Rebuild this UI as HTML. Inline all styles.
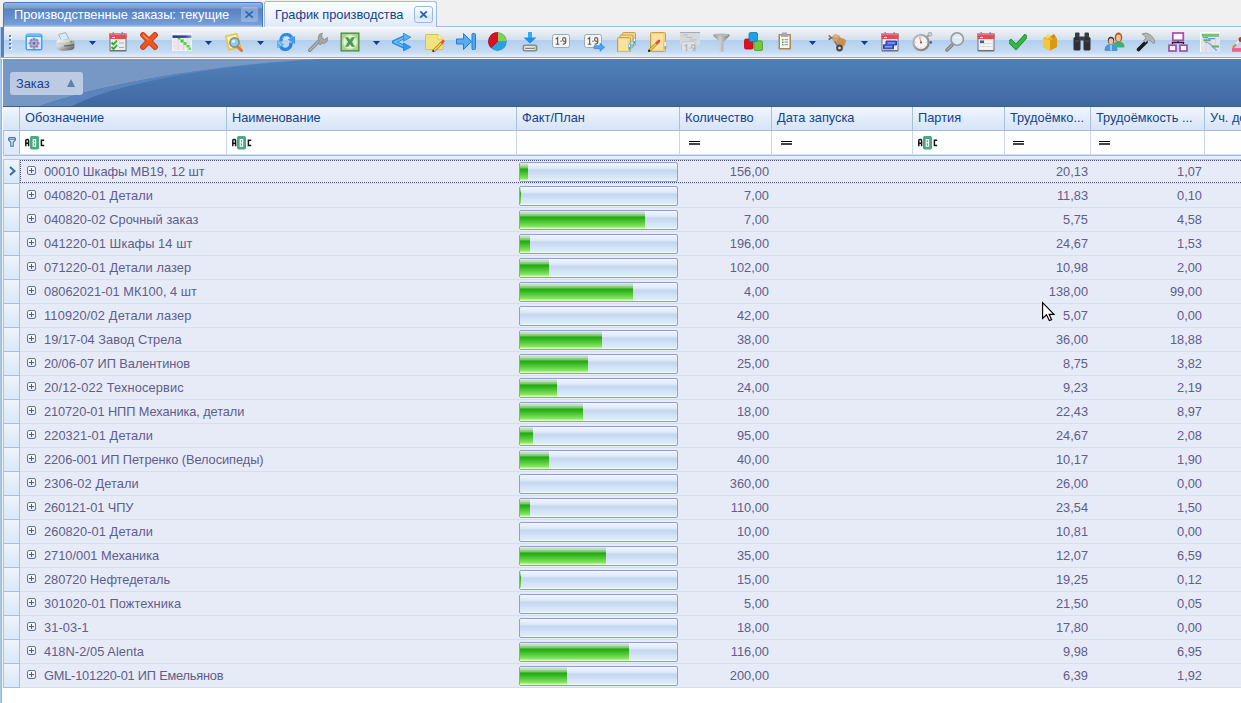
<!DOCTYPE html>
<html><head><meta charset="utf-8"><style>
*{margin:0;padding:0;box-sizing:border-box}
html,body{width:1241px;height:703px;overflow:hidden;background:#fff}
body{position:relative;font-family:"Liberation Sans",sans-serif;font-size:12.8px}
.a{position:absolute}
.t{position:absolute;white-space:pre;line-height:23px;height:23px}
.hd{color:#15428b}
.dt{color:#5f5d8b}
.r{text-align:right}
</style></head><body>

<div class="a" style="left:0;top:0;width:1241px;height:27px;background:#f0f0f0"></div>
<div class="a" style="left:437px;top:26px;width:804px;height:1px;background:#99bbe8"></div>
<div class="a" style="left:3px;top:2px;width:260px;height:25px;border:1px solid #4a78c0;border-bottom:none;border-radius:3px 3px 0 0;background:linear-gradient(#a9c0e8 0px,#8eaddb 1px,#7b9dd0 5px,#5883c3 6px,#5f89c7 11px,#78a0d8 22px,#a9c6ee 23px)"></div>
<div class="t" style="left:14px;top:3px;color:#fff">Производственные заказы: текущие</div>
<div class="a" style="left:241px;top:7px;width:17px;height:15px;border-radius:2px;background:rgba(255,255,255,0.25)"></div>
<svg class="a" style="left:244px;top:10px" width="11" height="9"><path d="M1.5 1.3L8.8 7.6M8.8 1.3L1.5 7.6" stroke="#2f66b8" stroke-width="1.7"/></svg>
<div class="a" style="left:264px;top:1px;width:173px;height:26px;border:1px solid #99bbe8;border-bottom:none;border-radius:3px 3px 0 0;background:linear-gradient(#ffffff,#f3f8fe 8px,#dfeaf9 24px,#eef4fb 25px)"></div>
<div class="t hd" style="left:275px;top:3px">График производства</div>
<div class="a" style="left:414px;top:6px;width:19px;height:17px;border:1px solid #9cb8e0;border-radius:3px;background:linear-gradient(#fbfdff,#e6effa 8px,#d6e4f6 9px,#eaf2fc)"></div>
<svg class="a" style="left:419px;top:10px" width="10" height="9"><path d="M1.3 1.3L7.8 7.6M7.8 1.3L1.3 7.6" stroke="#2a5cb0" stroke-width="1.7"/></svg>
<div class="a" style="left:0;top:27px;width:1px;height:676px;background:#a8c8f0"></div>
<div class="a" style="left:1px;top:58px;width:1px;height:645px;background:#98b6e0"></div>
<div class="a" style="left:1px;top:27px;width:3px;height:31px;background:#5a80b8"></div>
<div class="a" style="left:4px;top:27px;width:1237px;height:30px;border-radius:3px 0 0 3px;background:linear-gradient(#ffffff 0px,#f4f5f8 1px,#d3dfea 13px,#b2cfee 13px,#c6dbf3 25px,#dae8f8 28px,#e4eefa 30px)"></div>
<div class="a" style="left:1px;top:57px;width:1240px;height:1px;background:#8eaad0"></div>
<div class="a" style="left:1px;top:58px;width:1240px;height:1px;background:#ffffff"></div>
<div class="a" style="left:9px;top:35px;width:2px;height:2px;background:#6282b8;box-shadow:1px 1px 0 rgba(255,255,255,0.85)"></div>
<div class="a" style="left:9px;top:39px;width:2px;height:2px;background:#6282b8;box-shadow:1px 1px 0 rgba(255,255,255,0.85)"></div>
<div class="a" style="left:9px;top:43px;width:2px;height:2px;background:#6282b8;box-shadow:1px 1px 0 rgba(255,255,255,0.85)"></div>
<div class="a" style="left:9px;top:47px;width:2px;height:2px;background:#6282b8;box-shadow:1px 1px 0 rgba(255,255,255,0.85)"></div>
<svg class="a" style="left:25px;top:33px" width="18" height="18" viewBox="0 0 18 18"><defs><linearGradient id="wg" x1="0" y1="0" x2="1" y2="1"><stop offset="0" stop-color="#ffffff"/><stop offset="1" stop-color="#dcd6f4"/></linearGradient></defs><rect x="0.5" y="0.5" width="17" height="17" rx="2.5" fill="#3ba3ff"/><rect x="1.5" y="1.2" width="15" height="1.6" fill="#7cc4ff"/><rect x="2" y="4" width="14" height="12" fill="url(#wg)"/><path d="M12.71 8.82 L14.46 9.05 L14.46 11.55 L12.71 11.78 L12.68 11.88 L13.74 13.28 L11.98 15.04 L10.58 13.98 L10.48 14.01 L10.25 15.76 L7.75 15.76 L7.52 14.01 L7.42 13.98 L6.02 15.04 L4.26 13.28 L5.32 11.88 L5.29 11.78 L3.54 11.55 L3.54 9.05 L5.29 8.82 L5.32 8.72 L4.26 7.32 L6.02 5.56 L7.42 6.62 L7.52 6.59 L7.75 4.84 L10.25 4.84 L10.48 6.59 L10.58 6.62 L11.98 5.56 L13.74 7.32 L12.68 8.72Z" fill="#8e8cc0"/><circle cx="9" cy="10.3" r="3" fill="#aeacd6"/><circle cx="9" cy="10.3" r="1.2" fill="#6a68a8"/></svg>
<svg class="a" style="left:56px;top:32px" width="19" height="19" viewBox="0 0 19 19"><defs><linearGradient id="pg" x1="0" y1="0" x2="1" y2="1"><stop offset="0" stop-color="#fafafa"/><stop offset="0.4" stop-color="#d0d0d0"/><stop offset="0.75" stop-color="#808080"/><stop offset="1" stop-color="#5a5a5a"/></linearGradient></defs><path d="M2.5 2.5L9.5 0.5L13 7L5.5 8.5Z" fill="#d2ecfc" stroke="#9aa6b2" stroke-width="0.8"/><path d="M0.5 10Q0.5 7.5 3 7.5H15Q18.5 7.5 18.5 11V14.5Q18.5 17.5 15.5 18L7 18.8Q0.5 18.8 0.5 15Z" fill="url(#pg)"/><path d="M1 11.5Q6 12.5 18 11" stroke="#b8b8b8" stroke-width="0.6" fill="none"/><path d="M8 14Q13 14 18 12.5" stroke="#5a5a5a" stroke-width="1" fill="none"/><circle cx="15.3" cy="9.8" r="1.1" fill="#3cc03c"/></svg>
<svg class="a" style="left:89px;top:41px" width="7" height="4" viewBox="0 0 7 4"><path d="M0 0H7L3.5 4Z" fill="#1b3d82"/></svg>
<svg class="a" style="left:109px;top:32px" width="18" height="20" viewBox="0 0 18 20"><rect x="0.5" y="1" width="17" height="18.5" rx="1" fill="#6e6e7c"/><rect x="1.5" y="6.5" width="15" height="11.5" fill="#e9efec"/><rect x="0.5" y="1" width="17" height="6" rx="1" fill="#e64a52"/><rect x="0.5" y="1" width="17" height="2" rx="1" fill="#f07a80"/><rect x="3" y="5" width="3" height="1" fill="#fff"/><rect x="3.5" y="0" width="1.6" height="4.5" rx="0.8" fill="#8a8a8a"/><rect x="12.5" y="0" width="1.6" height="4.5" rx="0.8" fill="#8a8a8a"/><path d="M2.5 10.5L4.5 12.5L8 8.5" fill="none" stroke="#2aa82a" stroke-width="1.8"/><path d="M2.5 15L4.5 17L8 13" fill="none" stroke="#2aa82a" stroke-width="1.8"/><rect x="10" y="10.5" width="5" height="1" fill="#a8b0b0"/><rect x="10" y="15" width="5" height="1" fill="#a8b0b0"/></svg>
<svg class="a" style="left:140px;top:32px" width="18" height="18" viewBox="0 0 18 18"><path d="M3 3L15 15M15 3L3 15" stroke="#b83010" stroke-width="5.6" stroke-linecap="round"/><path d="M3 3L15 15M15 3L3 15" stroke="#f2541e" stroke-width="4.2" stroke-linecap="round"/><path d="M3.5 3.2L8 7.5" stroke="#ff9060" stroke-width="1.2" stroke-linecap="round"/></svg>
<svg class="a" style="left:172px;top:33px" width="20" height="18" viewBox="0 0 20 18"><rect x="0" y="0" width="20" height="18" fill="#fdfcfd"/><rect x="0.5" y="1" width="19" height="16.5" fill="#f2e6ee"/><path d="M6 5V17.5M11.5 5V17.5M16 5V17.5" stroke="#ddd0da" stroke-width="0.8"/><path d="M0.5 9H19.5M0.5 13H19.5" stroke="#eadde6" stroke-width="0.8"/><defs><linearGradient id="gh" x1="0" x2="1"><stop offset="0" stop-color="#1a3490"/><stop offset="0.7" stop-color="#2a4ab0"/><stop offset="1" stop-color="#7aa0e0"/></linearGradient></defs><rect x="0.5" y="2.4" width="19" height="2.5" fill="url(#gh)"/><rect x="6" y="5" width="2.5" height="1.5" fill="#40d040"/><rect x="8.5" y="6.5" width="3" height="3" fill="#38d038"/><rect x="11.5" y="9" width="3" height="3" fill="#48d848"/><rect x="14.5" y="12" width="3" height="2.5" fill="#50dc50"/><rect x="16.5" y="14.5" width="2.5" height="2.5" fill="#60e060"/></svg>
<svg class="a" style="left:205px;top:41px" width="7" height="4" viewBox="0 0 7 4"><path d="M0 0H7L3.5 4Z" fill="#1b3d82"/></svg>
<svg class="a" style="left:225px;top:33px" width="19" height="19" viewBox="0 0 19 19"><path d="M0.5 3L12 0.5L16 14L4 17Z" fill="#f2d860" stroke="#e0b830" stroke-width="0.8"/><path d="M2 4L11 2L14 13L5 15Z" fill="#fff3b0"/><path d="M11.5 12.5L16.5 17.5" stroke="#f07030" stroke-width="3" stroke-linecap="round"/><circle cx="9.5" cy="9.5" r="4.6" fill="#86cdf6" stroke="#8c8c8c" stroke-width="1.6"/><circle cx="8.5" cy="8.3" r="1.6" fill="#d8f2ff"/></svg>
<svg class="a" style="left:257px;top:41px" width="7" height="4" viewBox="0 0 7 4"><path d="M0 0H7L3.5 4Z" fill="#1b3d82"/></svg>
<svg class="a" style="left:277px;top:33px" width="18" height="18" viewBox="0 0 18 18"><path d="M3.8 8.5Q4.2 1.6 10 1.6Q13.2 1.6 14.6 4.6" fill="none" stroke="#2e8ae6" stroke-width="3.4"/><path d="M5 6Q6 3 10 3" fill="none" stroke="#8ccafa" stroke-width="1"/><path d="M10.5 6.5L18 3V11Z" fill="#3c9af0"/><path d="M14.2 9.5Q13.8 16.4 8 16.4Q4.8 16.4 3.4 13.4" fill="none" stroke="#2a84e0" stroke-width="3.4"/><path d="M7.5 11.5L0 15V7Z" fill="#58b0f6"/><path d="M1.5 9L4 12" stroke="#c0e4ff" stroke-width="0.8"/></svg>
<svg class="a" style="left:308px;top:32px" width="20" height="20" viewBox="0 0 20 20"><path d="M1.8 18.2L11 9" stroke="#858585" stroke-width="3.4" stroke-linecap="round"/><path d="M1.8 18.2L11 9" stroke="#b8b8b8" stroke-width="1.4" stroke-linecap="round"/><path d="M14.5 1Q10.5 1.5 10.2 5.5Q10 7.5 11.5 9L10 11L12 13L14 11.2Q17 12 19 9.5Q20 7.8 19.5 5.5L16.5 7.5L14 6L13.8 2.8Z" fill="#a6a6a6" stroke="#8a8a8a" stroke-width="0.8"/></svg>
<svg class="a" style="left:340px;top:32px" width="20" height="20" viewBox="0 0 20 20"><defs><radialGradient id="xg"><stop offset="0" stop-color="#c0e4a8"/><stop offset="0.7" stop-color="#e4f6d4"/><stop offset="1" stop-color="#a8d090"/></radialGradient></defs><rect x="0.5" y="0.5" width="19" height="19" fill="#4a8a3a"/><rect x="1.8" y="1.8" width="16.4" height="16.4" fill="url(#xg)"/><path d="M5 5.2H8.2L10 7.8L11.8 5.2H15L12 10L15 14.8H11.8L10 12.2L8.2 14.8H5L8 10Z" fill="#4a9a52"/><path d="M5.5 5.6H8L10 8.4" stroke="#70b870" stroke-width="0.6" fill="none"/></svg>
<svg class="a" style="left:373px;top:41px" width="7" height="4" viewBox="0 0 7 4"><path d="M0 0H7L3.5 4Z" fill="#1b3d82"/></svg>
<svg class="a" style="left:392px;top:33px" width="19" height="18" viewBox="0 0 19 18"><path d="M1.8 9L12.5 4M1.8 9L12.5 14" fill="none" stroke="#2a86d8" stroke-width="3.8" stroke-linecap="round"/><path d="M2.5 9L12.5 4.3M2.5 9L12.5 13.7" fill="none" stroke="#6cc0f8" stroke-width="1.8" stroke-linecap="round"/><path d="M11.5 0.2L18.8 4.2L11.5 8.2Z" fill="#56b2f4" stroke="#2a86d8" stroke-width="0.8" stroke-linejoin="round"/><path d="M11.5 10L18.8 14L11.5 18Z" fill="#2c9aee" stroke="#2a80d0" stroke-width="0.8" stroke-linejoin="round"/></svg>
<svg class="a" style="left:425px;top:34px" width="20" height="18" viewBox="0 0 20 18"><path d="M0.5 1Q0.5 0.5 1 0.5H13L18 5V15Q18 15.5 17.5 15.5H1Q0.5 15.5 0.5 15Z" fill="#f2e37e" stroke="#d6c24c" stroke-width="1"/><path d="M13 0.5V5H18" fill="#fff6c0" stroke="#d6c24c" stroke-width="0.8"/><path d="M8.5 17L17.5 8" stroke="#8a6a10" stroke-width="3" stroke-linecap="round"/><path d="M8.5 17L17.5 8" stroke="#f0d040" stroke-width="1.8"/><path d="M17 8.5L18.3 7.2" stroke="#f05050" stroke-width="2.6" stroke-linecap="round"/><path d="M8 17.5L9 16.5" stroke="#202020" stroke-width="1.5"/></svg>
<svg class="a" style="left:456px;top:33px" width="20" height="17" viewBox="0 0 20 17"><path d="M0.5 6H7.5V0.5L15.5 8.5L7.5 16.5V11H0.5Z" fill="#52aef0" stroke="#2a7ad0" stroke-width="1"/><rect x="16" y="0.5" width="3.5" height="16" rx="1" fill="#4aa8ee" stroke="#2a7ad0" stroke-width="1"/></svg>
<svg class="a" style="left:488px;top:32px" width="19" height="19" viewBox="0 0 19 19"><circle cx="9.5" cy="9.5" r="9.2" fill="#2a7ab8"/><path d="M9.5 9.5V0.6A8.9 8.9 0 0 1 18.4 9.5Z" fill="#82d050"/><path d="M9.5 9.5H18.4A8.9 8.9 0 0 1 3.2 15.8Z" fill="#2aa2dc"/><path d="M9.5 9.5L3.2 15.8A8.9 8.9 0 0 1 9.5 0.6Z" fill="#e0101e"/><path d="M9.5 9.5L3.2 15.8A8.9 8.9 0 0 1 9.5 0.6Z" fill="none" stroke="#a00818" stroke-width="0.6"/></svg>
<svg class="a" style="left:522px;top:32px" width="16" height="20" viewBox="0 0 16 20"><rect x="6" y="0" width="4" height="6" fill="#3aa8f4"/><path d="M1.5 5.5H14.5L8 11.5Z" fill="#1a94ee"/><rect x="0.5" y="12.5" width="15" height="7" rx="2.5" fill="#8a8a8a"/><rect x="2" y="14" width="12" height="4" rx="1.5" fill="#e8e8e8"/><rect x="3" y="15.8" width="9" height="1" fill="#6a6a6a"/><circle cx="12.5" cy="16.3" r="1" fill="#40d040"/></svg>
<svg class="a" style="left:552px;top:34px" width="18" height="14" viewBox="0 0 18 14"><rect x="0.5" y="0.5" width="17" height="13" rx="2" fill="#f4f4f4" stroke="#a0a8b2" stroke-width="1"/><path d="M3.8 5L5.6 3.6V10.2M3.8 10.2H7.4" fill="none" stroke="#5e5e5e" stroke-width="1.15"/><rect x="8.4" y="6.6" width="1.2" height="1.2" fill="#5e5e5e"/><path d="M13.6 7.2Q10.6 7.8 10.6 5.4Q10.6 3.6 12.1 3.6Q13.8 3.6 13.8 6.2V7.6Q13.8 10.3 10.8 10.3" fill="none" stroke="#5e5e5e" stroke-width="1.15"/></svg>
<svg class="a" style="left:584px;top:34px" width="21" height="18" viewBox="0 0 21 18"><rect x="0.5" y="0.5" width="17" height="13" rx="2" fill="#f4f4f4" stroke="#a0a8b2" stroke-width="1"/><path d="M3.8 5L5.6 3.6V10.2M3.8 10.2H7.4" fill="none" stroke="#5e5e5e" stroke-width="1.15"/><rect x="8.4" y="6.6" width="1.2" height="1.2" fill="#5e5e5e"/><path d="M13.6 7.2Q10.6 7.8 10.6 5.4Q10.6 3.6 12.1 3.6Q13.8 3.6 13.8 6.2V7.6Q13.8 10.3 10.8 10.3" fill="none" stroke="#5e5e5e" stroke-width="1.15"/><path d="M10 11.8H16V9.2L20.6 13.2L16 17.2V14.6H10Z" fill="#4aa8f2" stroke="#2a7ed0" stroke-width="0.7"/></svg>
<svg class="a" style="left:617px;top:32px" width="19" height="20" viewBox="0 0 19 20"><rect x="5.5" y="0.5" width="13" height="13" rx="1" fill="#f2d488" stroke="#caa050" stroke-width="1"/><rect x="7" y="2" width="9" height="10" fill="#f8e2a0"/><rect x="3.0" y="3.0" width="13" height="13" rx="1" fill="#f2d488" stroke="#caa050" stroke-width="1"/><rect x="4.5" y="4.5" width="9" height="10" fill="#f8e2a0"/><rect x="0.5" y="5.5" width="13" height="14.5" rx="1" fill="#f2d488" stroke="#caa050" stroke-width="1"/><rect x="2" y="7" width="9" height="11.5" fill="#f8e2a0"/><rect x="16.5" y="6" width="2" height="6" rx="1" fill="#fff" stroke="#38a8d8" stroke-width="0.6"/><rect x="14" y="9" width="2" height="6" rx="1" fill="#fff" stroke="#38a8d8" stroke-width="0.6"/><rect x="11.5" y="12" width="2" height="6" rx="1" fill="#fff" stroke="#38a8d8" stroke-width="0.6"/><rect x="17" y="9" width="1" height="2.5" fill="#38a8d8"/><rect x="14.5" y="12" width="1" height="2.5" fill="#38a8d8"/><rect x="12" y="15" width="1" height="2.5" fill="#38a8d8"/></svg>
<svg class="a" style="left:648px;top:32px" width="19" height="20" viewBox="0 0 19 20"><rect x="2.5" y="0.5" width="15" height="19" rx="1" fill="#f2d488" stroke="#caa050" stroke-width="1"/><rect x="4" y="2" width="11" height="16" fill="#f8e2a0"/><rect x="16" y="9.5" width="2.2" height="8" rx="1" fill="#fff" stroke="#c8a060" stroke-width="0.6"/><rect x="16.5" y="14" width="1.2" height="3" fill="#30a0e0"/><path d="M1 19L10 10" stroke="#9a7a20" stroke-width="2.8" stroke-linecap="round"/><path d="M1.5 18.5L10 10" stroke="#f2d840" stroke-width="1.6"/><path d="M9 11L11 9" stroke="#f04848" stroke-width="2.6" stroke-linecap="round"/><path d="M0.5 19.5L2 18" stroke="#181818" stroke-width="1.6"/></svg>
<svg class="a" style="left:680px;top:32px" width="20" height="19" viewBox="0 0 20 19"><rect x="0" y="0" width="20" height="13.5" fill="#d6d9de"/><rect x="0" y="0" width="20" height="1" fill="#a8acb2"/><path d="M3 3H8M6 5.5H12M9 8H17" stroke="#b8bcc2" stroke-width="1"/><rect x="1.5" y="9.5" width="14" height="13" rx="2" fill="#dcdfe4" stroke="#c4c8ce" stroke-width="1"/><path d="M4.8 14L6.6 12.6V19.2M4.8 19.2H8.4" fill="none" stroke="#b0b4ba" stroke-width="1.15"/><rect x="9.4" y="15.6" width="1.2" height="1.2" fill="#b0b4ba"/><path d="M14.6 16.2Q11.6 16.8 11.6 14.4Q11.6 12.6 13.1 12.6Q14.8 12.6 14.8 15.2V16.6Q14.8 19.3 11.8 19.3" fill="none" stroke="#b0b4ba" stroke-width="1.15"/></svg>
<svg class="a" style="left:713px;top:33px" width="17" height="19" viewBox="0 0 17 19"><defs><linearGradient id="fg" x1="0" x2="1"><stop offset="0" stop-color="#8a8a8a"/><stop offset="0.4" stop-color="#d0d0d0"/><stop offset="1" stop-color="#7a7a7a"/></linearGradient></defs><path d="M0.5 2Q0.5 0.5 8.5 0.5Q16.5 0.5 16.5 2V3L10.5 9V18Q10.5 19 8.5 19Q6.5 19 6.5 18V9L0.5 3Z" fill="url(#fg)"/><ellipse cx="8.5" cy="2" rx="7.5" ry="1.3" fill="#b8b8b8"/></svg>
<svg class="a" style="left:744px;top:32px" width="19" height="19" viewBox="0 0 19 19"><rect x="0.5" y="7" width="8.5" height="10" rx="1.5" fill="#e2101c" stroke="#b80810" stroke-width="0.8"/><rect x="10" y="8.8" width="8.5" height="9.7" rx="1.5" fill="#74c840" stroke="#489a28" stroke-width="0.8"/><rect x="5" y="0.5" width="8.5" height="9" rx="1.5" fill="#20a0e0" stroke="#1078b8" stroke-width="0.8"/></svg>
<svg class="a" style="left:778px;top:32px" width="13" height="18" viewBox="0 0 13 18"><rect x="0.5" y="2" width="12.5" height="15.5" rx="1" fill="#b08654"/><rect x="2" y="3.5" width="9.5" height="12.5" fill="#f8f8f8"/><path d="M4 0.5H9V3.5H10V5H3V3.5H4Z" fill="#a8a8a8"/><rect x="4" y="7" width="1.5" height="1.5" fill="#40c040"/><rect x="4" y="9.5" width="1.5" height="1.5" fill="#20b020"/><rect x="4" y="12" width="1.5" height="1.5" fill="#40c040"/><path d="M6.5 7.7H10M6.5 10.2H10M6.5 12.7H10" stroke="#a0a0a0" stroke-width="1.2"/></svg>
<svg class="a" style="left:809px;top:41px" width="7" height="4" viewBox="0 0 7 4"><path d="M0 0H7L3.5 4Z" fill="#1b3d82"/></svg>
<svg class="a" style="left:828px;top:34px" width="19" height="18" viewBox="0 0 19 18"><path d="M0.8 1.5L4 4.5M0.5 5.5L4.5 3.5L10.5 13" stroke="#6a6a6a" stroke-width="1.7" fill="none"/><rect x="4.5" y="0.5" width="7.5" height="7" rx="2.5" fill="#d4a062" transform="rotate(20 8 4)"/><rect x="9" y="4" width="8.5" height="8" rx="2.5" fill="#c99050" transform="rotate(20 13 8)"/><path d="M6 2.5Q8 1.5 10 3" stroke="#eac090" stroke-width="1.2" fill="none"/><circle cx="11.5" cy="14" r="3.4" fill="#4a4a4a"/><circle cx="11.5" cy="14" r="1.3" fill="#e0e0e0"/></svg>
<svg class="a" style="left:861px;top:41px" width="7" height="4" viewBox="0 0 7 4"><path d="M0 0H7L3.5 4Z" fill="#1b3d82"/></svg>
<svg class="a" style="left:881px;top:32px" width="18" height="20" viewBox="0 0 18 20"><rect x="0.5" y="1" width="17" height="18.5" rx="1" fill="#6e6e7c"/><rect x="1.5" y="6.5" width="15" height="11.5" fill="#e9efec"/><rect x="0.5" y="1" width="17" height="6" rx="1" fill="#e64a52"/><rect x="0.5" y="1" width="17" height="2" rx="1" fill="#f07a80"/><rect x="3" y="5" width="3" height="1" fill="#fff"/><rect x="3.5" y="0" width="1.6" height="4.5" rx="0.8" fill="#8a8a8a"/><rect x="12.5" y="0" width="1.6" height="4.5" rx="0.8" fill="#8a8a8a"/><path d="M5 9H15.5V13H12.5V16.8H2.5V12.8H5Z" fill="#3c5ad8" stroke="#2440c0" stroke-width="1"/><path d="M6.5 11H14M4 14.8H11" stroke="#c8d4f8" stroke-width="0.8"/></svg>
<svg class="a" style="left:912px;top:32px" width="21" height="20" viewBox="0 0 21 20"><defs><linearGradient id="swg" x1="0" y1="0" x2="1" y2="1"><stop offset="0" stop-color="#c8c8c8"/><stop offset="1" stop-color="#787878"/></linearGradient></defs><path d="M15 5L17.5 2.5" stroke="#9a9a9a" stroke-width="2"/><circle cx="18" cy="2.2" r="1.9" fill="#d0d0d0" stroke="#a0a0a0" stroke-width="0.8"/><rect x="17.6" y="9.2" width="2.2" height="2.4" fill="#4a5878"/><circle cx="9" cy="10.5" r="8.8" fill="url(#swg)"/><circle cx="9" cy="10.5" r="6.5" fill="#f4f4f4"/><path d="M9 4.5V5.8M9 15.2V16.5M3 10.5H4.3M13.7 10.5H15" stroke="#c0c0c0" stroke-width="0.8"/><path d="M7.6 5L9 10.5" stroke="#e05050" stroke-width="0.7"/><circle cx="9" cy="10.5" r="0.9" fill="#c02020"/></svg>
<svg class="a" style="left:945px;top:32px" width="20" height="20" viewBox="0 0 20 20"><path d="M2 18L7 13" stroke="#7a7a7a" stroke-width="3.2" stroke-linecap="round"/><path d="M2 18L7 13" stroke="#b0b0b0" stroke-width="1.2" stroke-linecap="round"/><circle cx="12.2" cy="7" r="6.2" fill="#dde9f6" stroke="#9a9a9a" stroke-width="1.6"/><path d="M9.5 5.5H16" stroke="#f4f8ff" stroke-width="1"/></svg>
<svg class="a" style="left:977px;top:32px" width="18" height="20" viewBox="0 0 18 20"><rect x="0.5" y="1" width="17" height="18.5" rx="1" fill="#6e6e7c"/><rect x="1.5" y="6.5" width="15" height="11.5" fill="#e9efec"/><rect x="0.5" y="1" width="17" height="6" rx="1" fill="#e64a52"/><rect x="0.5" y="1" width="17" height="2" rx="1" fill="#f07a80"/><rect x="3" y="5" width="3" height="1" fill="#fff"/><rect x="3.5" y="0" width="1.6" height="4.5" rx="0.8" fill="#8a8a8a"/><rect x="12.5" y="0" width="1.6" height="4.5" rx="0.8" fill="#8a8a8a"/><rect x="3" y="8.5" width="4" height="2.6" fill="#3858d0"/><path d="M9 9.8H11.5M12.5 9.8H15M3 13H6M7.5 13H10.5M11.5 13H15M3 16H6M7.5 16H10.5M11.5 16H15" stroke="#ffffff" stroke-width="1.2"/><path d="M1.5 11.5H16.5M1.5 14.5H16.5" stroke="#d0d8d8" stroke-width="0.8"/></svg>
<svg class="a" style="left:1009px;top:34px" width="18" height="16" viewBox="0 0 18 16"><path d="M2 8L7 13L16 3" fill="none" stroke="#1e8a2a" stroke-width="4.8" stroke-linecap="square"/><path d="M2 8L7 13L16 3" fill="none" stroke="#34b842" stroke-width="3.2" stroke-linecap="square"/></svg>
<svg class="a" style="left:1042px;top:33px" width="16" height="18" viewBox="0 0 16 18"><path d="M1 5L8 2.5L15 5V14L8 17.5L1 14Z" fill="#e8b020"/><path d="M1 5L8 7.5V17.5L1 14Z" fill="#f4c838"/><path d="M8 7.5L15 5V14L8 17.5Z" fill="#d89a10"/><path d="M3 4L6 1L9 3L6 6Z" fill="#f8d860"/><path d="M9 3L12 1L14 4L11 6Z" fill="#c88a10"/></svg>
<svg class="a" style="left:1073px;top:32px" width="18" height="19" viewBox="0 0 18 19"><rect x="2" y="0.5" width="4.5" height="5" rx="1" fill="#383c40"/><rect x="11.5" y="0.5" width="4.5" height="5" rx="1" fill="#383c40"/><rect x="0.5" y="5" width="7" height="13.5" rx="1.5" fill="#2e3236"/><rect x="10.5" y="5" width="7" height="13.5" rx="1.5" fill="#2e3236"/><rect x="6" y="4.5" width="6" height="4" fill="#3a3e42"/><path d="M2 9H6M12 9H16" stroke="#5a5e62" stroke-width="0.8"/></svg>
<svg class="a" style="left:1104px;top:32px" width="21" height="19" viewBox="0 0 21 19"><path d="M8.5 14.5Q9 9.5 14.5 9.5Q20 9.5 20.5 14.5Q20.5 15.5 19 15.5H10Q8.5 15.5 8.5 14.5Z" fill="#3cb470"/><ellipse cx="14.5" cy="5.5" rx="3.8" ry="5" fill="#b05a2a"/><ellipse cx="14.5" cy="6" rx="2.4" ry="3.4" fill="#f2c090"/><path d="M0.5 17.5Q1 12 7 12Q13 12 13.5 17.5Q13.5 19 12 19H2Q0.5 19 0.5 17.5Z" fill="#4a98dc"/><rect x="6.5" y="12.5" width="1" height="6" fill="#f0f8ff"/><ellipse cx="7" cy="8.5" rx="3.2" ry="3.8" fill="#3a2a2a"/><ellipse cx="7" cy="9.3" rx="2.4" ry="3" fill="#f2c090"/></svg>
<svg class="a" style="left:1136px;top:32px" width="20" height="20" viewBox="0 0 20 20"><path d="M2.5 17.5L10 10" stroke="#1a1a1a" stroke-width="3.6" stroke-linecap="round"/><path d="M6 2Q10 -0.5 14.5 3Q18.5 6 19 10.5L17 11.5Q15 8 12 8L9.5 10.5L7.5 8.5L10 6Q9 3.5 6 2Z" fill="#b4b4b4" stroke="#8a8a8a" stroke-width="0.8"/></svg>
<svg class="a" style="left:1168px;top:32px" width="20" height="20" viewBox="0 0 20 20"><path d="M10 8.5V10.5M4.5 12V10.5H15.5V12" fill="none" stroke="#202020" stroke-width="1.3"/><rect x="4.8" y="1" width="10.5" height="7.3" fill="#fff" stroke="#a64cac" stroke-width="1.7"/><rect x="1" y="13.2" width="7" height="5.8" fill="#fff" stroke="#a64cac" stroke-width="1.7"/><rect x="12" y="13.2" width="7" height="5.8" fill="#fff" stroke="#a64cac" stroke-width="1.7"/></svg>
<svg class="a" style="left:1200px;top:32px" width="20" height="20" viewBox="0 0 20 20"><rect x="0" y="0" width="20" height="20" fill="#ffffff"/><rect x="1" y="1" width="19" height="19" fill="#e4e2f2"/><path d="M6 4V20M11 4V20M15.5 4V20" stroke="#d0cee4" stroke-width="0.8"/><rect x="2" y="2" width="17" height="2.8" fill="#78c070"/><rect x="3" y="5.2" width="5" height="1" fill="#4a88d8"/><rect x="8" y="6.2" width="7" height="1" fill="#4a88d8"/><rect x="3.5" y="7.3" width="7" height="2" fill="#5ab84a"/><path d="M5 10Q10 11 12 14Q14 17 17 18.5" fill="none" stroke="#70a0e0" stroke-width="1.2"/><rect x="12" y="13.5" width="7" height="2" fill="#5ab84a"/></svg>
<svg class="a" style="left:1232px;top:37px" width="9" height="15" viewBox="0 0 9 15"><rect x="0" y="11" width="9" height="3.8" fill="#f2608e"/><path d="M2.5 9L8 2.5" stroke="#f0f0f0" stroke-width="1.6"/><path d="M1.5 10L3.5 8" stroke="#c09050" stroke-width="2.4" stroke-linecap="round"/><circle cx="9" cy="2.5" r="2.5" fill="#c83030"/></svg>
<div class="a" style="left:2px;top:58px;width:1px;height:645px;background:#f6f9fd"></div>
<svg class="a" style="left:3px;top:59px" width="1238" height="48">
<defs><linearGradient id="gp" x1="0" y1="0" x2="0" y2="1"><stop offset="0" stop-color="#5080b9"/><stop offset="1" stop-color="#4068a2"/></linearGradient></defs>
<rect width="1238" height="48" fill="url(#gp)"/>
<path d="M0 0H315 C253.9 3.5 123.3 16 34 48 H0Z" fill="#7798c5"/>
<path d="M34 48 C123.3 16 253.9 3.5 315 0 C250.6 4.2 123.1 18 67 48Z" fill="#5b84bc"/>
<rect y="47" width="1238" height="1" fill="#3a5f98"/>
</svg>
<div class="a" style="left:10px;top:72px;width:73px;height:23px;border-radius:3px;background:#bccbe2"></div>
<div class="t hd" style="left:16px;top:72px">Заказ</div>
<svg class="a" style="left:67px;top:79px" width="8" height="8"><path d="M0 8L4 0L8 8Z" fill="#5a7fb0"/></svg>
<div class="a" style="left:3px;top:107px;width:1238px;height:23px;border-radius:3px 0 0 0;background:linear-gradient(#f0f6fe,#d6e4f6)"></div>
<div class="a" style="left:3px;top:130px;width:1238px;height:1px;background:#a3bde0"></div>
<div class="a" style="left:19px;top:107px;width:1px;height:23px;background:#a8c0dc"></div>
<div class="a" style="left:226px;top:107px;width:1px;height:23px;background:#a8c0dc"></div>
<div class="a" style="left:516px;top:107px;width:1px;height:23px;background:#a8c0dc"></div>
<div class="a" style="left:679px;top:107px;width:1px;height:23px;background:#a8c0dc"></div>
<div class="a" style="left:771px;top:107px;width:1px;height:23px;background:#a8c0dc"></div>
<div class="a" style="left:912px;top:107px;width:1px;height:23px;background:#a8c0dc"></div>
<div class="a" style="left:1004px;top:107px;width:1px;height:23px;background:#a8c0dc"></div>
<div class="a" style="left:1090px;top:107px;width:1px;height:23px;background:#a8c0dc"></div>
<div class="a" style="left:1204px;top:107px;width:1px;height:23px;background:#a8c0dc"></div>
<div class="t hd" style="left:25px;top:106px">Обозначение</div>
<div class="t hd" style="left:232px;top:106px">Наименование</div>
<div class="t hd" style="left:522px;top:106px">Факт/План</div>
<div class="t hd" style="left:685px;top:106px">Количество</div>
<div class="t hd" style="left:777px;top:106px">Дата запуска</div>
<div class="t hd" style="left:918px;top:106px">Партия</div>
<div class="t hd" style="left:1010px;top:106px">Трудоёмко...</div>
<div class="t hd" style="left:1096px;top:106px">Трудоёмкость ...</div>
<div class="t hd" style="left:1210px;top:106px">Уч. должность</div>
<div class="a" style="left:3px;top:131px;width:16px;height:23px;background:linear-gradient(#eaf2fd,#dde9f8)"></div>
<div class="a" style="left:3px;top:131px;width:1px;height:557px;background:#a8c0e0"></div>
<div class="a" style="left:19px;top:131px;width:1px;height:23px;background:#a8c0dc"></div>
<div class="a" style="left:226px;top:131px;width:1px;height:23px;background:#c8d8ee"></div>
<div class="a" style="left:516px;top:131px;width:1px;height:23px;background:#c8d8ee"></div>
<div class="a" style="left:679px;top:131px;width:1px;height:23px;background:#c8d8ee"></div>
<div class="a" style="left:771px;top:131px;width:1px;height:23px;background:#c8d8ee"></div>
<div class="a" style="left:912px;top:131px;width:1px;height:23px;background:#c8d8ee"></div>
<div class="a" style="left:1004px;top:131px;width:1px;height:23px;background:#c8d8ee"></div>
<div class="a" style="left:1090px;top:131px;width:1px;height:23px;background:#c8d8ee"></div>
<div class="a" style="left:1204px;top:131px;width:1px;height:23px;background:#c8d8ee"></div>
<div class="a" style="left:3px;top:154px;width:1238px;height:1px;background:#d0e0f2"></div>
<div class="a" style="left:3px;top:155px;width:1238px;height:1px;background:#a4bcdc"></div>
<div class="a" style="left:3px;top:156px;width:1238px;height:3px;background:#e4eefb"></div>
<div class="a" style="left:3px;top:159px;width:1238px;height:1px;background:#b4c8e6"></div>
<svg class="a" style="left:8px;top:137px" width="8" height="10"><path d="M0.6 1.6Q0.6 0.6 1.6 0.6H6.4Q7.4 0.6 7.4 1.6V2.6Q7.4 3.6 6 4.4L5.2 5V9.2H2.8V5L2 4.4Q0.6 3.6 0.6 2.6Z" fill="none" stroke="#4a6ea8" stroke-width="1.1"/><path d="M0.8 2.4H7.2" stroke="#4a6ea8" stroke-width="0.9"/></svg>
<svg class="a" style="left:25px;top:136px" width="20" height="14"><path d="M0.8 10.2V4.6Q0.8 3.6 1.8 3.6H2.6Q3.6 3.6 3.6 4.6V10.2M0.8 7.2H3.6" fill="none" stroke="#151515" stroke-width="1.5"/><rect x="5" y="0" width="9" height="13.4" rx="1.6" fill="#4aa97f"/><path d="M8.2 3.6H10.6V6.6H8.2ZM8.2 6.8H10.6V10.2H8.2Z" fill="none" stroke="#fff" stroke-width="1.1"/><path d="M19.2 4.2H16.4V9.6H19.2" fill="none" stroke="#151515" stroke-width="1.5"/></svg>
<svg class="a" style="left:232px;top:136px" width="20" height="14"><path d="M0.8 10.2V4.6Q0.8 3.6 1.8 3.6H2.6Q3.6 3.6 3.6 4.6V10.2M0.8 7.2H3.6" fill="none" stroke="#151515" stroke-width="1.5"/><rect x="5" y="0" width="9" height="13.4" rx="1.6" fill="#4aa97f"/><path d="M8.2 3.6H10.6V6.6H8.2ZM8.2 6.8H10.6V10.2H8.2Z" fill="none" stroke="#fff" stroke-width="1.1"/><path d="M19.2 4.2H16.4V9.6H19.2" fill="none" stroke="#151515" stroke-width="1.5"/></svg>
<svg class="a" style="left:918px;top:136px" width="20" height="14"><path d="M0.8 10.2V4.6Q0.8 3.6 1.8 3.6H2.6Q3.6 3.6 3.6 4.6V10.2M0.8 7.2H3.6" fill="none" stroke="#151515" stroke-width="1.5"/><rect x="5" y="0" width="9" height="13.4" rx="1.6" fill="#4aa97f"/><path d="M8.2 3.6H10.6V6.6H8.2ZM8.2 6.8H10.6V10.2H8.2Z" fill="none" stroke="#fff" stroke-width="1.1"/><path d="M19.2 4.2H16.4V9.6H19.2" fill="none" stroke="#151515" stroke-width="1.5"/></svg>
<div class="a" style="left:689px;top:141px;width:11px;height:1px;background:#000"></div><div class="a" style="left:689px;top:143px;width:11px;height:2px;background:#444"></div>
<div class="a" style="left:781px;top:141px;width:11px;height:1px;background:#000"></div><div class="a" style="left:781px;top:143px;width:11px;height:2px;background:#444"></div>
<div class="a" style="left:1013px;top:141px;width:11px;height:1px;background:#000"></div><div class="a" style="left:1013px;top:143px;width:11px;height:2px;background:#444"></div>
<div class="a" style="left:1099px;top:141px;width:11px;height:1px;background:#000"></div><div class="a" style="left:1099px;top:143px;width:11px;height:2px;background:#444"></div>
<div class="a" style="left:4px;top:160px;width:15px;height:23px;background:linear-gradient(#eef4fc,#d9e7f8)"></div>
<div class="a" style="left:3px;top:183px;width:17px;height:1px;background:#a8c0e0"></div>
<div class="a" style="left:19px;top:160px;width:1px;height:24px;background:#a8c0e0"></div>
<div class="a" style="left:20px;top:160px;width:1221px;height:23px;background:#e6ebf7"></div>
<div class="a" style="left:20px;top:183px;width:1221px;height:1px;background:#d3e0f0"></div>
<div class="a" style="left:27px;top:166px;width:9px;height:9px;border:1px solid #64769a;border-radius:2px;background:linear-gradient(#fcfdfe,#dde2ec)"></div>
<div class="a" style="left:29px;top:170px;width:5px;height:1px;background:#4e6088"></div>
<div class="a" style="left:31px;top:168px;width:1px;height:5px;background:#4e6088"></div>
<div class="t dt" style="left:44px;top:160px;letter-spacing:-0.045px">00010 Шкафы МВ19, 12 шт</div>
<div class="a" style="left:519px;top:162px;width:159px;height:20px;border:1px solid #86a5d5;border-radius:2px;background:linear-gradient(#f8fbfe 0px,#eef4fc 1px,#dae6f5 6px,#c2d6ef 7px,#e4edf9 17px,#fbfdff 18px)"></div>
<div class="a" style="left:520px;top:163px;width:7.6px;height:18px;background:linear-gradient(#e4f2dc 0px,#a9d5a0 3px,#72be6c 5px,#1fa70e 6px,#45c22e 10px,#8fe46a 16px,#d8ffb8 17px)"></div>
<div class="t dt r" style="left:679px;top:160px;width:90px">156,00</div>
<div class="t dt r" style="left:1004px;top:160px;width:84px">20,13</div>
<div class="t dt r" style="left:1090px;top:160px;width:112px">1,07</div>
<div class="a" style="left:4px;top:184px;width:15px;height:23px;background:linear-gradient(#eef4fc,#d9e7f8)"></div>
<div class="a" style="left:3px;top:207px;width:17px;height:1px;background:#a8c0e0"></div>
<div class="a" style="left:19px;top:184px;width:1px;height:24px;background:#a8c0e0"></div>
<div class="a" style="left:20px;top:184px;width:1221px;height:23px;background:#e6ebf7"></div>
<div class="a" style="left:20px;top:207px;width:1221px;height:1px;background:#d3e0f0"></div>
<div class="a" style="left:27px;top:190px;width:9px;height:9px;border:1px solid #64769a;border-radius:2px;background:linear-gradient(#fcfdfe,#dde2ec)"></div>
<div class="a" style="left:29px;top:194px;width:5px;height:1px;background:#4e6088"></div>
<div class="a" style="left:31px;top:192px;width:1px;height:5px;background:#4e6088"></div>
<div class="t dt" style="left:44px;top:184px;letter-spacing:0.087px">040820-01 Детали</div>
<div class="a" style="left:519px;top:186px;width:159px;height:20px;border:1px solid #86a5d5;border-radius:2px;background:linear-gradient(#f8fbfe 0px,#eef4fc 1px,#dae6f5 6px,#c2d6ef 7px,#e4edf9 17px,#fbfdff 18px)"></div>
<div class="a" style="left:520px;top:187px;width:1.0px;height:18px;background:linear-gradient(#e4f2dc 0px,#a9d5a0 3px,#72be6c 5px,#1fa70e 6px,#45c22e 10px,#8fe46a 16px,#d8ffb8 17px)"></div>
<div class="t dt r" style="left:679px;top:184px;width:90px">7,00</div>
<div class="t dt r" style="left:1004px;top:184px;width:84px">11,83</div>
<div class="t dt r" style="left:1090px;top:184px;width:112px">0,10</div>
<div class="a" style="left:4px;top:208px;width:15px;height:23px;background:linear-gradient(#eef4fc,#d9e7f8)"></div>
<div class="a" style="left:3px;top:231px;width:17px;height:1px;background:#a8c0e0"></div>
<div class="a" style="left:19px;top:208px;width:1px;height:24px;background:#a8c0e0"></div>
<div class="a" style="left:20px;top:208px;width:1221px;height:23px;background:#e6ebf7"></div>
<div class="a" style="left:20px;top:231px;width:1221px;height:1px;background:#d3e0f0"></div>
<div class="a" style="left:27px;top:214px;width:9px;height:9px;border:1px solid #64769a;border-radius:2px;background:linear-gradient(#fcfdfe,#dde2ec)"></div>
<div class="a" style="left:29px;top:218px;width:5px;height:1px;background:#4e6088"></div>
<div class="a" style="left:31px;top:216px;width:1px;height:5px;background:#4e6088"></div>
<div class="t dt" style="left:44px;top:208px;letter-spacing:0.045px">040820-02 Срочный заказ</div>
<div class="a" style="left:519px;top:210px;width:159px;height:20px;border:1px solid #86a5d5;border-radius:2px;background:linear-gradient(#f8fbfe 0px,#eef4fc 1px,#dae6f5 6px,#c2d6ef 7px,#e4edf9 17px,#fbfdff 18px)"></div>
<div class="a" style="left:520px;top:211px;width:124.9px;height:18px;background:linear-gradient(#e4f2dc 0px,#a9d5a0 3px,#72be6c 5px,#1fa70e 6px,#45c22e 10px,#8fe46a 16px,#d8ffb8 17px)"></div>
<div class="t dt r" style="left:679px;top:208px;width:90px">7,00</div>
<div class="t dt r" style="left:1004px;top:208px;width:84px">5,75</div>
<div class="t dt r" style="left:1090px;top:208px;width:112px">4,58</div>
<div class="a" style="left:4px;top:232px;width:15px;height:23px;background:linear-gradient(#eef4fc,#d9e7f8)"></div>
<div class="a" style="left:3px;top:255px;width:17px;height:1px;background:#a8c0e0"></div>
<div class="a" style="left:19px;top:232px;width:1px;height:24px;background:#a8c0e0"></div>
<div class="a" style="left:20px;top:232px;width:1221px;height:23px;background:#e6ebf7"></div>
<div class="a" style="left:20px;top:255px;width:1221px;height:1px;background:#d3e0f0"></div>
<div class="a" style="left:27px;top:238px;width:9px;height:9px;border:1px solid #64769a;border-radius:2px;background:linear-gradient(#fcfdfe,#dde2ec)"></div>
<div class="a" style="left:29px;top:242px;width:5px;height:1px;background:#4e6088"></div>
<div class="a" style="left:31px;top:240px;width:1px;height:5px;background:#4e6088"></div>
<div class="t dt" style="left:44px;top:232px;letter-spacing:0.085px">041220-01 Шкафы 14 шт</div>
<div class="a" style="left:519px;top:234px;width:159px;height:20px;border:1px solid #86a5d5;border-radius:2px;background:linear-gradient(#f8fbfe 0px,#eef4fc 1px,#dae6f5 6px,#c2d6ef 7px,#e4edf9 17px,#fbfdff 18px)"></div>
<div class="a" style="left:520px;top:235px;width:9.8px;height:18px;background:linear-gradient(#e4f2dc 0px,#a9d5a0 3px,#72be6c 5px,#1fa70e 6px,#45c22e 10px,#8fe46a 16px,#d8ffb8 17px)"></div>
<div class="t dt r" style="left:679px;top:232px;width:90px">196,00</div>
<div class="t dt r" style="left:1004px;top:232px;width:84px">24,67</div>
<div class="t dt r" style="left:1090px;top:232px;width:112px">1,53</div>
<div class="a" style="left:4px;top:256px;width:15px;height:23px;background:linear-gradient(#eef4fc,#d9e7f8)"></div>
<div class="a" style="left:3px;top:279px;width:17px;height:1px;background:#a8c0e0"></div>
<div class="a" style="left:19px;top:256px;width:1px;height:24px;background:#a8c0e0"></div>
<div class="a" style="left:20px;top:256px;width:1221px;height:23px;background:#e6ebf7"></div>
<div class="a" style="left:20px;top:279px;width:1221px;height:1px;background:#d3e0f0"></div>
<div class="a" style="left:27px;top:262px;width:9px;height:9px;border:1px solid #64769a;border-radius:2px;background:linear-gradient(#fcfdfe,#dde2ec)"></div>
<div class="a" style="left:29px;top:266px;width:5px;height:1px;background:#4e6088"></div>
<div class="a" style="left:31px;top:264px;width:1px;height:5px;background:#4e6088"></div>
<div class="t dt" style="left:44px;top:256px;letter-spacing:0.076px">071220-01 Детали лазер</div>
<div class="a" style="left:519px;top:258px;width:159px;height:20px;border:1px solid #86a5d5;border-radius:2px;background:linear-gradient(#f8fbfe 0px,#eef4fc 1px,#dae6f5 6px,#c2d6ef 7px,#e4edf9 17px,#fbfdff 18px)"></div>
<div class="a" style="left:520px;top:259px;width:28.6px;height:18px;background:linear-gradient(#e4f2dc 0px,#a9d5a0 3px,#72be6c 5px,#1fa70e 6px,#45c22e 10px,#8fe46a 16px,#d8ffb8 17px)"></div>
<div class="t dt r" style="left:679px;top:256px;width:90px">102,00</div>
<div class="t dt r" style="left:1004px;top:256px;width:84px">10,98</div>
<div class="t dt r" style="left:1090px;top:256px;width:112px">2,00</div>
<div class="a" style="left:4px;top:280px;width:15px;height:23px;background:linear-gradient(#eef4fc,#d9e7f8)"></div>
<div class="a" style="left:3px;top:303px;width:17px;height:1px;background:#a8c0e0"></div>
<div class="a" style="left:19px;top:280px;width:1px;height:24px;background:#a8c0e0"></div>
<div class="a" style="left:20px;top:280px;width:1221px;height:23px;background:#e6ebf7"></div>
<div class="a" style="left:20px;top:303px;width:1221px;height:1px;background:#d3e0f0"></div>
<div class="a" style="left:27px;top:286px;width:9px;height:9px;border:1px solid #64769a;border-radius:2px;background:linear-gradient(#fcfdfe,#dde2ec)"></div>
<div class="a" style="left:29px;top:290px;width:5px;height:1px;background:#4e6088"></div>
<div class="a" style="left:31px;top:288px;width:1px;height:5px;background:#4e6088"></div>
<div class="t dt" style="left:44px;top:280px;letter-spacing:0.027px">08062021-01 МК100, 4 шт</div>
<div class="a" style="left:519px;top:282px;width:159px;height:20px;border:1px solid #86a5d5;border-radius:2px;background:linear-gradient(#f8fbfe 0px,#eef4fc 1px,#dae6f5 6px,#c2d6ef 7px,#e4edf9 17px,#fbfdff 18px)"></div>
<div class="a" style="left:520px;top:283px;width:112.8px;height:18px;background:linear-gradient(#e4f2dc 0px,#a9d5a0 3px,#72be6c 5px,#1fa70e 6px,#45c22e 10px,#8fe46a 16px,#d8ffb8 17px)"></div>
<div class="t dt r" style="left:679px;top:280px;width:90px">4,00</div>
<div class="t dt r" style="left:1004px;top:280px;width:84px">138,00</div>
<div class="t dt r" style="left:1090px;top:280px;width:112px">99,00</div>
<div class="a" style="left:4px;top:304px;width:15px;height:23px;background:linear-gradient(#eef4fc,#d9e7f8)"></div>
<div class="a" style="left:3px;top:327px;width:17px;height:1px;background:#a8c0e0"></div>
<div class="a" style="left:19px;top:304px;width:1px;height:24px;background:#a8c0e0"></div>
<div class="a" style="left:20px;top:304px;width:1221px;height:23px;background:#e6ebf7"></div>
<div class="a" style="left:20px;top:327px;width:1221px;height:1px;background:#d3e0f0"></div>
<div class="a" style="left:27px;top:310px;width:9px;height:9px;border:1px solid #64769a;border-radius:2px;background:linear-gradient(#fcfdfe,#dde2ec)"></div>
<div class="a" style="left:29px;top:314px;width:5px;height:1px;background:#4e6088"></div>
<div class="a" style="left:31px;top:312px;width:1px;height:5px;background:#4e6088"></div>
<div class="t dt" style="left:44px;top:304px;letter-spacing:0.171px">110920/02 Детали лазер</div>
<div class="a" style="left:519px;top:306px;width:159px;height:20px;border:1px solid #86a5d5;border-radius:2px;background:linear-gradient(#f8fbfe 0px,#eef4fc 1px,#dae6f5 6px,#c2d6ef 7px,#e4edf9 17px,#fbfdff 18px)"></div>
<div class="t dt r" style="left:679px;top:304px;width:90px">42,00</div>
<div class="t dt r" style="left:1004px;top:304px;width:84px">5,07</div>
<div class="t dt r" style="left:1090px;top:304px;width:112px">0,00</div>
<div class="a" style="left:4px;top:328px;width:15px;height:23px;background:linear-gradient(#eef4fc,#d9e7f8)"></div>
<div class="a" style="left:3px;top:351px;width:17px;height:1px;background:#a8c0e0"></div>
<div class="a" style="left:19px;top:328px;width:1px;height:24px;background:#a8c0e0"></div>
<div class="a" style="left:20px;top:328px;width:1221px;height:23px;background:#e6ebf7"></div>
<div class="a" style="left:20px;top:351px;width:1221px;height:1px;background:#d3e0f0"></div>
<div class="a" style="left:27px;top:334px;width:9px;height:9px;border:1px solid #64769a;border-radius:2px;background:linear-gradient(#fcfdfe,#dde2ec)"></div>
<div class="a" style="left:29px;top:338px;width:5px;height:1px;background:#4e6088"></div>
<div class="a" style="left:31px;top:336px;width:1px;height:5px;background:#4e6088"></div>
<div class="t dt" style="left:44px;top:328px;letter-spacing:0.030px">19/17-04 Завод Стрела</div>
<div class="a" style="left:519px;top:330px;width:159px;height:20px;border:1px solid #86a5d5;border-radius:2px;background:linear-gradient(#f8fbfe 0px,#eef4fc 1px,#dae6f5 6px,#c2d6ef 7px,#e4edf9 17px,#fbfdff 18px)"></div>
<div class="a" style="left:520px;top:331px;width:81.6px;height:18px;background:linear-gradient(#e4f2dc 0px,#a9d5a0 3px,#72be6c 5px,#1fa70e 6px,#45c22e 10px,#8fe46a 16px,#d8ffb8 17px)"></div>
<div class="t dt r" style="left:679px;top:328px;width:90px">38,00</div>
<div class="t dt r" style="left:1004px;top:328px;width:84px">36,00</div>
<div class="t dt r" style="left:1090px;top:328px;width:112px">18,88</div>
<div class="a" style="left:4px;top:352px;width:15px;height:23px;background:linear-gradient(#eef4fc,#d9e7f8)"></div>
<div class="a" style="left:3px;top:375px;width:17px;height:1px;background:#a8c0e0"></div>
<div class="a" style="left:19px;top:352px;width:1px;height:24px;background:#a8c0e0"></div>
<div class="a" style="left:20px;top:352px;width:1221px;height:23px;background:#e6ebf7"></div>
<div class="a" style="left:20px;top:375px;width:1221px;height:1px;background:#d3e0f0"></div>
<div class="a" style="left:27px;top:358px;width:9px;height:9px;border:1px solid #64769a;border-radius:2px;background:linear-gradient(#fcfdfe,#dde2ec)"></div>
<div class="a" style="left:29px;top:362px;width:5px;height:1px;background:#4e6088"></div>
<div class="a" style="left:31px;top:360px;width:1px;height:5px;background:#4e6088"></div>
<div class="t dt" style="left:44px;top:352px;letter-spacing:-0.057px">20/06-07 ИП Валентинов</div>
<div class="a" style="left:519px;top:354px;width:159px;height:20px;border:1px solid #86a5d5;border-radius:2px;background:linear-gradient(#f8fbfe 0px,#eef4fc 1px,#dae6f5 6px,#c2d6ef 7px,#e4edf9 17px,#fbfdff 18px)"></div>
<div class="a" style="left:520px;top:355px;width:67.6px;height:18px;background:linear-gradient(#e4f2dc 0px,#a9d5a0 3px,#72be6c 5px,#1fa70e 6px,#45c22e 10px,#8fe46a 16px,#d8ffb8 17px)"></div>
<div class="t dt r" style="left:679px;top:352px;width:90px">25,00</div>
<div class="t dt r" style="left:1004px;top:352px;width:84px">8,75</div>
<div class="t dt r" style="left:1090px;top:352px;width:112px">3,82</div>
<div class="a" style="left:4px;top:376px;width:15px;height:23px;background:linear-gradient(#eef4fc,#d9e7f8)"></div>
<div class="a" style="left:3px;top:399px;width:17px;height:1px;background:#a8c0e0"></div>
<div class="a" style="left:19px;top:376px;width:1px;height:24px;background:#a8c0e0"></div>
<div class="a" style="left:20px;top:376px;width:1221px;height:23px;background:#e6ebf7"></div>
<div class="a" style="left:20px;top:399px;width:1221px;height:1px;background:#d3e0f0"></div>
<div class="a" style="left:27px;top:382px;width:9px;height:9px;border:1px solid #64769a;border-radius:2px;background:linear-gradient(#fcfdfe,#dde2ec)"></div>
<div class="a" style="left:29px;top:386px;width:5px;height:1px;background:#4e6088"></div>
<div class="a" style="left:31px;top:384px;width:1px;height:5px;background:#4e6088"></div>
<div class="t dt" style="left:44px;top:376px;letter-spacing:0.150px">20/12-022 Техносервис</div>
<div class="a" style="left:519px;top:378px;width:159px;height:20px;border:1px solid #86a5d5;border-radius:2px;background:linear-gradient(#f8fbfe 0px,#eef4fc 1px,#dae6f5 6px,#c2d6ef 7px,#e4edf9 17px,#fbfdff 18px)"></div>
<div class="a" style="left:520px;top:379px;width:36.6px;height:18px;background:linear-gradient(#e4f2dc 0px,#a9d5a0 3px,#72be6c 5px,#1fa70e 6px,#45c22e 10px,#8fe46a 16px,#d8ffb8 17px)"></div>
<div class="t dt r" style="left:679px;top:376px;width:90px">24,00</div>
<div class="t dt r" style="left:1004px;top:376px;width:84px">9,23</div>
<div class="t dt r" style="left:1090px;top:376px;width:112px">2,19</div>
<div class="a" style="left:4px;top:400px;width:15px;height:23px;background:linear-gradient(#eef4fc,#d9e7f8)"></div>
<div class="a" style="left:3px;top:423px;width:17px;height:1px;background:#a8c0e0"></div>
<div class="a" style="left:19px;top:400px;width:1px;height:24px;background:#a8c0e0"></div>
<div class="a" style="left:20px;top:400px;width:1221px;height:23px;background:#e6ebf7"></div>
<div class="a" style="left:20px;top:423px;width:1221px;height:1px;background:#d3e0f0"></div>
<div class="a" style="left:27px;top:406px;width:9px;height:9px;border:1px solid #64769a;border-radius:2px;background:linear-gradient(#fcfdfe,#dde2ec)"></div>
<div class="a" style="left:29px;top:410px;width:5px;height:1px;background:#4e6088"></div>
<div class="a" style="left:31px;top:408px;width:1px;height:5px;background:#4e6088"></div>
<div class="t dt" style="left:44px;top:400px;letter-spacing:-0.086px">210720-01 НПП Механика, детали</div>
<div class="a" style="left:519px;top:402px;width:159px;height:20px;border:1px solid #86a5d5;border-radius:2px;background:linear-gradient(#f8fbfe 0px,#eef4fc 1px,#dae6f5 6px,#c2d6ef 7px,#e4edf9 17px,#fbfdff 18px)"></div>
<div class="a" style="left:520px;top:403px;width:62.7px;height:18px;background:linear-gradient(#e4f2dc 0px,#a9d5a0 3px,#72be6c 5px,#1fa70e 6px,#45c22e 10px,#8fe46a 16px,#d8ffb8 17px)"></div>
<div class="t dt r" style="left:679px;top:400px;width:90px">18,00</div>
<div class="t dt r" style="left:1004px;top:400px;width:84px">22,43</div>
<div class="t dt r" style="left:1090px;top:400px;width:112px">8,97</div>
<div class="a" style="left:4px;top:424px;width:15px;height:23px;background:linear-gradient(#eef4fc,#d9e7f8)"></div>
<div class="a" style="left:3px;top:447px;width:17px;height:1px;background:#a8c0e0"></div>
<div class="a" style="left:19px;top:424px;width:1px;height:24px;background:#a8c0e0"></div>
<div class="a" style="left:20px;top:424px;width:1221px;height:23px;background:#e6ebf7"></div>
<div class="a" style="left:20px;top:447px;width:1221px;height:1px;background:#d3e0f0"></div>
<div class="a" style="left:27px;top:430px;width:9px;height:9px;border:1px solid #64769a;border-radius:2px;background:linear-gradient(#fcfdfe,#dde2ec)"></div>
<div class="a" style="left:29px;top:434px;width:5px;height:1px;background:#4e6088"></div>
<div class="a" style="left:31px;top:432px;width:1px;height:5px;background:#4e6088"></div>
<div class="t dt" style="left:44px;top:424px;letter-spacing:0.087px">220321-01 Детали</div>
<div class="a" style="left:519px;top:426px;width:159px;height:20px;border:1px solid #86a5d5;border-radius:2px;background:linear-gradient(#f8fbfe 0px,#eef4fc 1px,#dae6f5 6px,#c2d6ef 7px,#e4edf9 17px,#fbfdff 18px)"></div>
<div class="a" style="left:520px;top:427px;width:12.7px;height:18px;background:linear-gradient(#e4f2dc 0px,#a9d5a0 3px,#72be6c 5px,#1fa70e 6px,#45c22e 10px,#8fe46a 16px,#d8ffb8 17px)"></div>
<div class="t dt r" style="left:679px;top:424px;width:90px">95,00</div>
<div class="t dt r" style="left:1004px;top:424px;width:84px">24,67</div>
<div class="t dt r" style="left:1090px;top:424px;width:112px">2,08</div>
<div class="a" style="left:4px;top:448px;width:15px;height:23px;background:linear-gradient(#eef4fc,#d9e7f8)"></div>
<div class="a" style="left:3px;top:471px;width:17px;height:1px;background:#a8c0e0"></div>
<div class="a" style="left:19px;top:448px;width:1px;height:24px;background:#a8c0e0"></div>
<div class="a" style="left:20px;top:448px;width:1221px;height:23px;background:#e6ebf7"></div>
<div class="a" style="left:20px;top:471px;width:1221px;height:1px;background:#d3e0f0"></div>
<div class="a" style="left:27px;top:454px;width:9px;height:9px;border:1px solid #64769a;border-radius:2px;background:linear-gradient(#fcfdfe,#dde2ec)"></div>
<div class="a" style="left:29px;top:458px;width:5px;height:1px;background:#4e6088"></div>
<div class="a" style="left:31px;top:456px;width:1px;height:5px;background:#4e6088"></div>
<div class="t dt" style="left:44px;top:448px;letter-spacing:-0.062px">2206-001 ИП Петренко (Велосипеды)</div>
<div class="a" style="left:519px;top:450px;width:159px;height:20px;border:1px solid #86a5d5;border-radius:2px;background:linear-gradient(#f8fbfe 0px,#eef4fc 1px,#dae6f5 6px,#c2d6ef 7px,#e4edf9 17px,#fbfdff 18px)"></div>
<div class="a" style="left:520px;top:451px;width:28.6px;height:18px;background:linear-gradient(#e4f2dc 0px,#a9d5a0 3px,#72be6c 5px,#1fa70e 6px,#45c22e 10px,#8fe46a 16px,#d8ffb8 17px)"></div>
<div class="t dt r" style="left:679px;top:448px;width:90px">40,00</div>
<div class="t dt r" style="left:1004px;top:448px;width:84px">10,17</div>
<div class="t dt r" style="left:1090px;top:448px;width:112px">1,90</div>
<div class="a" style="left:4px;top:472px;width:15px;height:23px;background:linear-gradient(#eef4fc,#d9e7f8)"></div>
<div class="a" style="left:3px;top:495px;width:17px;height:1px;background:#a8c0e0"></div>
<div class="a" style="left:19px;top:472px;width:1px;height:24px;background:#a8c0e0"></div>
<div class="a" style="left:20px;top:472px;width:1221px;height:23px;background:#e6ebf7"></div>
<div class="a" style="left:20px;top:495px;width:1221px;height:1px;background:#d3e0f0"></div>
<div class="a" style="left:27px;top:478px;width:9px;height:9px;border:1px solid #64769a;border-radius:2px;background:linear-gradient(#fcfdfe,#dde2ec)"></div>
<div class="a" style="left:29px;top:482px;width:5px;height:1px;background:#4e6088"></div>
<div class="a" style="left:31px;top:480px;width:1px;height:5px;background:#4e6088"></div>
<div class="t dt" style="left:44px;top:472px;letter-spacing:0.108px">2306-02 Детали</div>
<div class="a" style="left:519px;top:474px;width:159px;height:20px;border:1px solid #86a5d5;border-radius:2px;background:linear-gradient(#f8fbfe 0px,#eef4fc 1px,#dae6f5 6px,#c2d6ef 7px,#e4edf9 17px,#fbfdff 18px)"></div>
<div class="t dt r" style="left:679px;top:472px;width:90px">360,00</div>
<div class="t dt r" style="left:1004px;top:472px;width:84px">26,00</div>
<div class="t dt r" style="left:1090px;top:472px;width:112px">0,00</div>
<div class="a" style="left:4px;top:496px;width:15px;height:23px;background:linear-gradient(#eef4fc,#d9e7f8)"></div>
<div class="a" style="left:3px;top:519px;width:17px;height:1px;background:#a8c0e0"></div>
<div class="a" style="left:19px;top:496px;width:1px;height:24px;background:#a8c0e0"></div>
<div class="a" style="left:20px;top:496px;width:1221px;height:23px;background:#e6ebf7"></div>
<div class="a" style="left:20px;top:519px;width:1221px;height:1px;background:#d3e0f0"></div>
<div class="a" style="left:27px;top:502px;width:9px;height:9px;border:1px solid #64769a;border-radius:2px;background:linear-gradient(#fcfdfe,#dde2ec)"></div>
<div class="a" style="left:29px;top:506px;width:5px;height:1px;background:#4e6088"></div>
<div class="a" style="left:31px;top:504px;width:1px;height:5px;background:#4e6088"></div>
<div class="t dt" style="left:44px;top:496px;letter-spacing:-0.100px">260121-01 ЧПУ</div>
<div class="a" style="left:519px;top:498px;width:159px;height:20px;border:1px solid #86a5d5;border-radius:2px;background:linear-gradient(#f8fbfe 0px,#eef4fc 1px,#dae6f5 6px,#c2d6ef 7px,#e4edf9 17px,#fbfdff 18px)"></div>
<div class="a" style="left:520px;top:499px;width:9.5px;height:18px;background:linear-gradient(#e4f2dc 0px,#a9d5a0 3px,#72be6c 5px,#1fa70e 6px,#45c22e 10px,#8fe46a 16px,#d8ffb8 17px)"></div>
<div class="t dt r" style="left:679px;top:496px;width:90px">110,00</div>
<div class="t dt r" style="left:1004px;top:496px;width:84px">23,54</div>
<div class="t dt r" style="left:1090px;top:496px;width:112px">1,50</div>
<div class="a" style="left:4px;top:520px;width:15px;height:23px;background:linear-gradient(#eef4fc,#d9e7f8)"></div>
<div class="a" style="left:3px;top:543px;width:17px;height:1px;background:#a8c0e0"></div>
<div class="a" style="left:19px;top:520px;width:1px;height:24px;background:#a8c0e0"></div>
<div class="a" style="left:20px;top:520px;width:1221px;height:23px;background:#e6ebf7"></div>
<div class="a" style="left:20px;top:543px;width:1221px;height:1px;background:#d3e0f0"></div>
<div class="a" style="left:27px;top:526px;width:9px;height:9px;border:1px solid #64769a;border-radius:2px;background:linear-gradient(#fcfdfe,#dde2ec)"></div>
<div class="a" style="left:29px;top:530px;width:5px;height:1px;background:#4e6088"></div>
<div class="a" style="left:31px;top:528px;width:1px;height:5px;background:#4e6088"></div>
<div class="t dt" style="left:44px;top:520px;letter-spacing:0.087px">260820-01 Детали</div>
<div class="a" style="left:519px;top:522px;width:159px;height:20px;border:1px solid #86a5d5;border-radius:2px;background:linear-gradient(#f8fbfe 0px,#eef4fc 1px,#dae6f5 6px,#c2d6ef 7px,#e4edf9 17px,#fbfdff 18px)"></div>
<div class="t dt r" style="left:679px;top:520px;width:90px">10,00</div>
<div class="t dt r" style="left:1004px;top:520px;width:84px">10,81</div>
<div class="t dt r" style="left:1090px;top:520px;width:112px">0,00</div>
<div class="a" style="left:4px;top:544px;width:15px;height:23px;background:linear-gradient(#eef4fc,#d9e7f8)"></div>
<div class="a" style="left:3px;top:567px;width:17px;height:1px;background:#a8c0e0"></div>
<div class="a" style="left:19px;top:544px;width:1px;height:24px;background:#a8c0e0"></div>
<div class="a" style="left:20px;top:544px;width:1221px;height:23px;background:#e6ebf7"></div>
<div class="a" style="left:20px;top:567px;width:1221px;height:1px;background:#d3e0f0"></div>
<div class="a" style="left:27px;top:550px;width:9px;height:9px;border:1px solid #64769a;border-radius:2px;background:linear-gradient(#fcfdfe,#dde2ec)"></div>
<div class="a" style="left:29px;top:554px;width:5px;height:1px;background:#4e6088"></div>
<div class="a" style="left:31px;top:552px;width:1px;height:5px;background:#4e6088"></div>
<div class="t dt" style="left:44px;top:544px;letter-spacing:0.000px">2710/001 Механика</div>
<div class="a" style="left:519px;top:546px;width:159px;height:20px;border:1px solid #86a5d5;border-radius:2px;background:linear-gradient(#f8fbfe 0px,#eef4fc 1px,#dae6f5 6px,#c2d6ef 7px,#e4edf9 17px,#fbfdff 18px)"></div>
<div class="a" style="left:520px;top:547px;width:85.6px;height:18px;background:linear-gradient(#e4f2dc 0px,#a9d5a0 3px,#72be6c 5px,#1fa70e 6px,#45c22e 10px,#8fe46a 16px,#d8ffb8 17px)"></div>
<div class="t dt r" style="left:679px;top:544px;width:90px">35,00</div>
<div class="t dt r" style="left:1004px;top:544px;width:84px">12,07</div>
<div class="t dt r" style="left:1090px;top:544px;width:112px">6,59</div>
<div class="a" style="left:4px;top:568px;width:15px;height:23px;background:linear-gradient(#eef4fc,#d9e7f8)"></div>
<div class="a" style="left:3px;top:591px;width:17px;height:1px;background:#a8c0e0"></div>
<div class="a" style="left:19px;top:568px;width:1px;height:24px;background:#a8c0e0"></div>
<div class="a" style="left:20px;top:568px;width:1221px;height:23px;background:#e6ebf7"></div>
<div class="a" style="left:20px;top:591px;width:1221px;height:1px;background:#d3e0f0"></div>
<div class="a" style="left:27px;top:574px;width:9px;height:9px;border:1px solid #64769a;border-radius:2px;background:linear-gradient(#fcfdfe,#dde2ec)"></div>
<div class="a" style="left:29px;top:578px;width:5px;height:1px;background:#4e6088"></div>
<div class="a" style="left:31px;top:576px;width:1px;height:5px;background:#4e6088"></div>
<div class="t dt" style="left:44px;top:568px;letter-spacing:-0.024px">280720 Нефтедеталь</div>
<div class="a" style="left:519px;top:570px;width:159px;height:20px;border:1px solid #86a5d5;border-radius:2px;background:linear-gradient(#f8fbfe 0px,#eef4fc 1px,#dae6f5 6px,#c2d6ef 7px,#e4edf9 17px,#fbfdff 18px)"></div>
<div class="a" style="left:520px;top:571px;width:1.0px;height:18px;background:linear-gradient(#e4f2dc 0px,#a9d5a0 3px,#72be6c 5px,#1fa70e 6px,#45c22e 10px,#8fe46a 16px,#d8ffb8 17px)"></div>
<div class="t dt r" style="left:679px;top:568px;width:90px">15,00</div>
<div class="t dt r" style="left:1004px;top:568px;width:84px">19,25</div>
<div class="t dt r" style="left:1090px;top:568px;width:112px">0,12</div>
<div class="a" style="left:4px;top:592px;width:15px;height:23px;background:linear-gradient(#eef4fc,#d9e7f8)"></div>
<div class="a" style="left:3px;top:615px;width:17px;height:1px;background:#a8c0e0"></div>
<div class="a" style="left:19px;top:592px;width:1px;height:24px;background:#a8c0e0"></div>
<div class="a" style="left:20px;top:592px;width:1221px;height:23px;background:#e6ebf7"></div>
<div class="a" style="left:20px;top:615px;width:1221px;height:1px;background:#d3e0f0"></div>
<div class="a" style="left:27px;top:598px;width:9px;height:9px;border:1px solid #64769a;border-radius:2px;background:linear-gradient(#fcfdfe,#dde2ec)"></div>
<div class="a" style="left:29px;top:602px;width:5px;height:1px;background:#4e6088"></div>
<div class="a" style="left:31px;top:600px;width:1px;height:5px;background:#4e6088"></div>
<div class="t dt" style="left:44px;top:592px;letter-spacing:0.074px">301020-01 Пожтехника</div>
<div class="a" style="left:519px;top:594px;width:159px;height:20px;border:1px solid #86a5d5;border-radius:2px;background:linear-gradient(#f8fbfe 0px,#eef4fc 1px,#dae6f5 6px,#c2d6ef 7px,#e4edf9 17px,#fbfdff 18px)"></div>
<div class="t dt r" style="left:679px;top:592px;width:90px">5,00</div>
<div class="t dt r" style="left:1004px;top:592px;width:84px">21,50</div>
<div class="t dt r" style="left:1090px;top:592px;width:112px">0,05</div>
<div class="a" style="left:4px;top:616px;width:15px;height:23px;background:linear-gradient(#eef4fc,#d9e7f8)"></div>
<div class="a" style="left:3px;top:639px;width:17px;height:1px;background:#a8c0e0"></div>
<div class="a" style="left:19px;top:616px;width:1px;height:24px;background:#a8c0e0"></div>
<div class="a" style="left:20px;top:616px;width:1221px;height:23px;background:#e6ebf7"></div>
<div class="a" style="left:20px;top:639px;width:1221px;height:1px;background:#d3e0f0"></div>
<div class="a" style="left:27px;top:622px;width:9px;height:9px;border:1px solid #64769a;border-radius:2px;background:linear-gradient(#fcfdfe,#dde2ec)"></div>
<div class="a" style="left:29px;top:626px;width:5px;height:1px;background:#4e6088"></div>
<div class="a" style="left:31px;top:624px;width:1px;height:5px;background:#4e6088"></div>
<div class="t dt" style="left:44px;top:616px;letter-spacing:0.083px">31-03-1</div>
<div class="a" style="left:519px;top:618px;width:159px;height:20px;border:1px solid #86a5d5;border-radius:2px;background:linear-gradient(#f8fbfe 0px,#eef4fc 1px,#dae6f5 6px,#c2d6ef 7px,#e4edf9 17px,#fbfdff 18px)"></div>
<div class="t dt r" style="left:679px;top:616px;width:90px">18,00</div>
<div class="t dt r" style="left:1004px;top:616px;width:84px">17,80</div>
<div class="t dt r" style="left:1090px;top:616px;width:112px">0,00</div>
<div class="a" style="left:4px;top:640px;width:15px;height:23px;background:linear-gradient(#eef4fc,#d9e7f8)"></div>
<div class="a" style="left:3px;top:663px;width:17px;height:1px;background:#a8c0e0"></div>
<div class="a" style="left:19px;top:640px;width:1px;height:24px;background:#a8c0e0"></div>
<div class="a" style="left:20px;top:640px;width:1221px;height:23px;background:#e6ebf7"></div>
<div class="a" style="left:20px;top:663px;width:1221px;height:1px;background:#d3e0f0"></div>
<div class="a" style="left:27px;top:646px;width:9px;height:9px;border:1px solid #64769a;border-radius:2px;background:linear-gradient(#fcfdfe,#dde2ec)"></div>
<div class="a" style="left:29px;top:650px;width:5px;height:1px;background:#4e6088"></div>
<div class="a" style="left:31px;top:648px;width:1px;height:5px;background:#4e6088"></div>
<div class="t dt" style="left:44px;top:640px;letter-spacing:0.067px">418N-2/05 Alenta</div>
<div class="a" style="left:519px;top:642px;width:159px;height:20px;border:1px solid #86a5d5;border-radius:2px;background:linear-gradient(#f8fbfe 0px,#eef4fc 1px,#dae6f5 6px,#c2d6ef 7px,#e4edf9 17px,#fbfdff 18px)"></div>
<div class="a" style="left:520px;top:643px;width:108.5px;height:18px;background:linear-gradient(#e4f2dc 0px,#a9d5a0 3px,#72be6c 5px,#1fa70e 6px,#45c22e 10px,#8fe46a 16px,#d8ffb8 17px)"></div>
<div class="t dt r" style="left:679px;top:640px;width:90px">116,00</div>
<div class="t dt r" style="left:1004px;top:640px;width:84px">9,98</div>
<div class="t dt r" style="left:1090px;top:640px;width:112px">6,95</div>
<div class="a" style="left:4px;top:664px;width:15px;height:23px;background:linear-gradient(#eef4fc,#d9e7f8)"></div>
<div class="a" style="left:3px;top:687px;width:17px;height:1px;background:#a8c0e0"></div>
<div class="a" style="left:19px;top:664px;width:1px;height:24px;background:#a8c0e0"></div>
<div class="a" style="left:20px;top:664px;width:1221px;height:23px;background:#e6ebf7"></div>
<div class="a" style="left:20px;top:687px;width:1221px;height:1px;background:#d3e0f0"></div>
<div class="a" style="left:27px;top:670px;width:9px;height:9px;border:1px solid #64769a;border-radius:2px;background:linear-gradient(#fcfdfe,#dde2ec)"></div>
<div class="a" style="left:29px;top:674px;width:5px;height:1px;background:#4e6088"></div>
<div class="a" style="left:31px;top:672px;width:1px;height:5px;background:#4e6088"></div>
<div class="t dt" style="left:44px;top:664px;letter-spacing:-0.208px">GML-101220-01 ИП Емельянов</div>
<div class="a" style="left:519px;top:666px;width:159px;height:20px;border:1px solid #86a5d5;border-radius:2px;background:linear-gradient(#f8fbfe 0px,#eef4fc 1px,#dae6f5 6px,#c2d6ef 7px,#e4edf9 17px,#fbfdff 18px)"></div>
<div class="a" style="left:520px;top:667px;width:46.6px;height:18px;background:linear-gradient(#e4f2dc 0px,#a9d5a0 3px,#72be6c 5px,#1fa70e 6px,#45c22e 10px,#8fe46a 16px,#d8ffb8 17px)"></div>
<div class="t dt r" style="left:679px;top:664px;width:90px">200,00</div>
<div class="t dt r" style="left:1004px;top:664px;width:84px">6,39</div>
<div class="t dt r" style="left:1090px;top:664px;width:112px">1,92</div>
<svg class="a" style="left:9px;top:166px" width="7" height="10"><path d="M1 1L5.5 5L1 9" fill="none" stroke="#3d6aa5" stroke-width="2"/></svg>
<div class="a" style="left:20px;top:160px;width:1221px;height:23px;border:1px dotted #4a4a78;border-right:none"></div>
<svg class="a" style="left:1041px;top:301px" width="15" height="22"><path d="M1.6 1.6V17.4L5.5 13.8L8.3 19.6L10.6 18.7L8.1 13.3H13Z" fill="#fff" stroke="#000" stroke-width="1.15" stroke-linejoin="miter"/></svg>
</body></html>
